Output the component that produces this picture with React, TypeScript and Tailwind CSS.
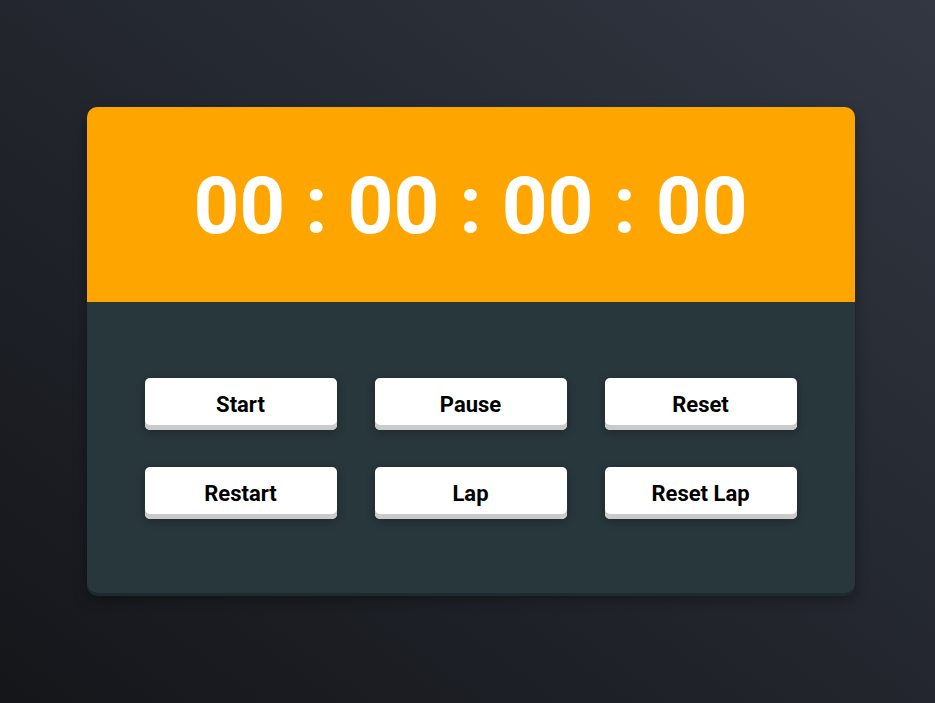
export default function App() {
  const buttons = ["Start", "Pause", "Reset", "Restart", "Lap", "Reset Lap"];

  return (
    <div
      className="flex h-[703px] w-full items-center justify-center bg-gradient-to-bl from-[#323742] to-[#14161a]"
      style={{ fontFamily: "Roboto, 'Liberation Sans', sans-serif" }}
    >
      <div className="mb-[4px] ml-[6px] w-[768px] overflow-hidden rounded-[10px] shadow-[0_3px_0_#1d2a2e,0_6px_14px_rgba(0,0,0,0.35)]">
        {/* Display */}
        <div className="flex h-[195px] items-center justify-center bg-[#ffa500] pt-[4px]">
          <span className="text-[80px] font-bold leading-none text-white">
            00 : 00 : 00 : 00
          </span>
        </div>

        {/* Controls */}
        <div className="grid h-[291px] grid-cols-3 content-start gap-x-[38px] gap-y-[37px] bg-[#28373c] px-[58px] pt-[76px]">
          {buttons.map((b) => (
            <button
              key={b}
              className="h-[52px] rounded-[5px] bg-white pt-[1px] text-[22px] font-bold text-black shadow-[inset_0_-5px_0_#cacaca,0_2px_8px_rgba(0,0,0,0.3)]"
            >
              {b}
            </button>
          ))}
        </div>
      </div>
    </div>
  );
}
